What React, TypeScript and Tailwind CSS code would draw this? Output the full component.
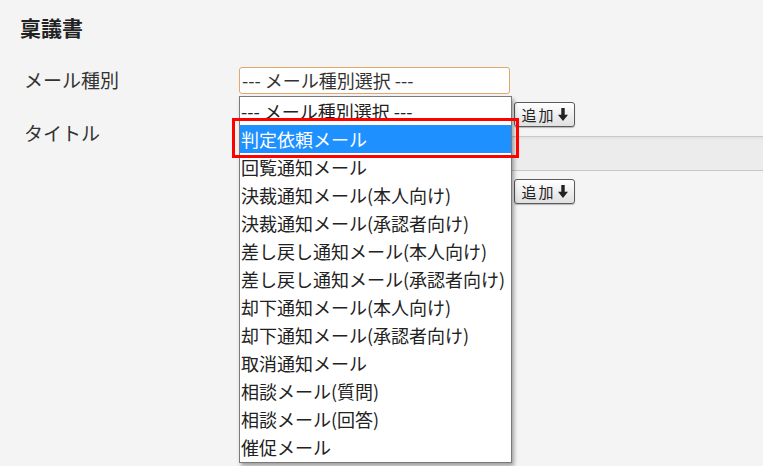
import React from 'react';

const options = [
  '--- メール種別選択 ---',
  '判定依頼メール',
  '回覧通知メール',
  '決裁通知メール(本人向け)',
  '決裁通知メール(承認者向け)',
  '差し戻し通知メール(本人向け)',
  '差し戻し通知メール(承認者向け)',
  '却下通知メール(本人向け)',
  '却下通知メール(承認者向け)',
  '取消通知メール',
  '相談メール(質問)',
  '相談メール(回答)',
  '催促メール',
];

const font = { fontFamily: '"Noto Sans CJK JP", "Noto Sans", sans-serif' };

function AddButton() {
  return (
    <button className="flex h-[25px] w-[61px] items-center justify-center gap-[2px] rounded-[3px] border border-[#5a5a5a] bg-gradient-to-b from-white to-[#e0e0e0] text-[15px] leading-none text-[#222] shadow-[0_1px_1px_rgba(0,0,0,0.25)]">
      <span className="tracking-[2px]">追加</span>
      <svg width="10" height="13" viewBox="0 0 10 13">
        <path d="M3.3 0h3.4v6.8H10L5 13 0 6.8h3.3z" fill="#222" />
      </svg>
    </button>
  );
}

export default function App() {
  return (
    <div className="relative h-[466px] w-[763px] overflow-hidden bg-[#f4f4f4] text-[#333]" style={font}>
      <h2 className="pl-[20px] pt-[12px] text-[21px] font-bold leading-[30px] text-[#222]">稟議書</h2>

      <div className="mt-[24px] flex items-center">
        <div className="w-[239px] pl-[24px] text-[19px] leading-[28px]">メール種別</div>
        <div className="flex h-[27px] w-[271px] items-center rounded-[3px] border border-[#e2a86b] bg-white px-[2px] text-[18px] leading-none">
          --- メール種別選択 ---
        </div>
      </div>

      <div className="mt-[8px] flex">
        <div className="w-[239px] pl-[24px] pt-[17px] text-[19px] leading-[28px]">タイトル</div>
        <div className="flex flex-1 flex-col">
          <div className="flex pl-[275px]">
            <AddButton />
          </div>
          <div className="mt-[9px] h-[35px] border-y border-[#c8c8c8] bg-[#ececec] shadow-[inset_0_2px_2px_rgba(0,0,0,0.04)]" />
          <div className="mt-[8px] flex pl-[275px]">
            <AddButton />
          </div>
        </div>
      </div>

      <div className="absolute left-[239px] top-[96px] w-[273px] border border-[#7a7a7a] bg-white pb-[1px] shadow-[2px_3px_4px_rgba(0,0,0,0.35)]">
        {options.map((o, i) => (
          <div
            key={o}
            className={`flex h-[28px] items-center whitespace-nowrap pl-[1px] text-[18px] leading-none ${i === 1 ? 'bg-[#1e90ff] text-white' : 'text-[#222]'}`}
          >
            {o}
          </div>
        ))}
      </div>

      <div className="pointer-events-none absolute left-[232px] top-[118px] h-[40px] w-[287px] border-[3px] border-[#ff0000]" />
    </div>
  );
}
